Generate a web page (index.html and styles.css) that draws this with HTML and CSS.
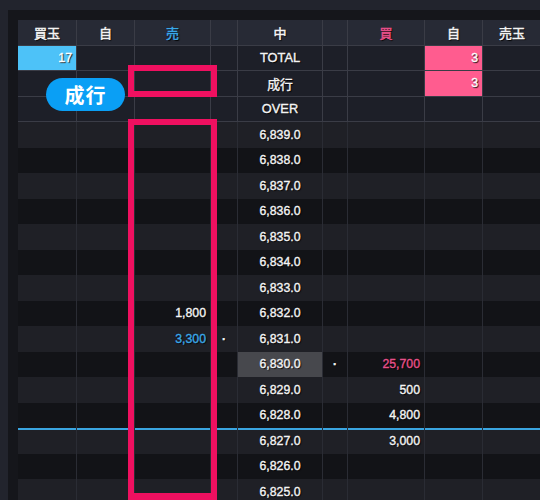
FILE: index.html
```html
<!DOCTYPE html>
<html lang="ja">
<head>
<meta charset="utf-8">
<link rel="stylesheet" href="styles.css">
</head>
<body>
<div class="frame">
  <div class="inner">
    <div class="board">
      <div class="row head">
        <div class="c">買玉</div><div class="c">自</div><div class="c sell">売</div><div class="c"></div><div class="c">中</div><div class="c"></div><div class="c buy">買</div><div class="c">自</div><div class="c">売玉</div>
      </div>
      <div class="row top">
        <div class="c num bluebg">17</div><div class="c"></div><div class="c"></div><div class="c"></div><div class="c mid">TOTAL</div><div class="c"></div><div class="c"></div><div class="c num pinkbg">3</div><div class="c"></div>
      </div>
      <div class="row top">
        <div class="c"></div><div class="c"></div><div class="c"></div><div class="c"></div><div class="c mid">成行</div><div class="c"></div><div class="c"></div><div class="c num pinkbg">3</div><div class="c"></div>
      </div>
      <div class="row top last">
        <div class="c"></div><div class="c"></div><div class="c"></div><div class="c"></div><div class="c mid">OVER</div><div class="c"></div><div class="c"></div><div class="c"></div><div class="c"></div>
      </div>

      <div class="row odd"><div class="c"></div><div class="c"></div><div class="c"></div><div class="c"></div><div class="c mid">6,839.0</div><div class="c"></div><div class="c"></div><div class="c"></div><div class="c"></div></div>
      <div class="row even"><div class="c"></div><div class="c"></div><div class="c"></div><div class="c"></div><div class="c mid">6,838.0</div><div class="c"></div><div class="c"></div><div class="c"></div><div class="c"></div></div>
      <div class="row odd"><div class="c"></div><div class="c"></div><div class="c"></div><div class="c"></div><div class="c mid">6,837.0</div><div class="c"></div><div class="c"></div><div class="c"></div><div class="c"></div></div>
      <div class="row even"><div class="c"></div><div class="c"></div><div class="c"></div><div class="c"></div><div class="c mid">6,836.0</div><div class="c"></div><div class="c"></div><div class="c"></div><div class="c"></div></div>
      <div class="row odd"><div class="c"></div><div class="c"></div><div class="c"></div><div class="c"></div><div class="c mid">6,835.0</div><div class="c"></div><div class="c"></div><div class="c"></div><div class="c"></div></div>
      <div class="row even"><div class="c"></div><div class="c"></div><div class="c"></div><div class="c"></div><div class="c mid">6,834.0</div><div class="c"></div><div class="c"></div><div class="c"></div><div class="c"></div></div>
      <div class="row odd"><div class="c"></div><div class="c"></div><div class="c"></div><div class="c"></div><div class="c mid">6,833.0</div><div class="c"></div><div class="c"></div><div class="c"></div><div class="c"></div></div>
      <div class="row even"><div class="c"></div><div class="c"></div><div class="c num">1,800</div><div class="c"></div><div class="c mid">6,832.0</div><div class="c"></div><div class="c"></div><div class="c"></div><div class="c"></div></div>
      <div class="row odd"><div class="c"></div><div class="c"></div><div class="c num sell">3,300</div><div class="c dot">·</div><div class="c mid">6,831.0</div><div class="c"></div><div class="c"></div><div class="c"></div><div class="c"></div></div>
      <div class="row even"><div class="c"></div><div class="c"></div><div class="c"></div><div class="c"></div><div class="c mid cur">6,830.0</div><div class="c dot">·</div><div class="c num buy">25,700</div><div class="c"></div><div class="c"></div></div>
      <div class="row odd"><div class="c"></div><div class="c"></div><div class="c"></div><div class="c"></div><div class="c mid">6,829.0</div><div class="c"></div><div class="c num">500</div><div class="c"></div><div class="c"></div></div>
      <div class="row even"><div class="c"></div><div class="c"></div><div class="c"></div><div class="c"></div><div class="c mid">6,828.0</div><div class="c"></div><div class="c num">4,800</div><div class="c"></div><div class="c"></div></div>
      <div class="row odd cut"><div class="c"></div><div class="c"></div><div class="c"></div><div class="c"></div><div class="c mid">6,827.0</div><div class="c"></div><div class="c num">3,000</div><div class="c"></div><div class="c"></div></div>
      <div class="row even"><div class="c"></div><div class="c"></div><div class="c"></div><div class="c"></div><div class="c mid">6,826.0</div><div class="c"></div><div class="c"></div><div class="c"></div><div class="c"></div></div>
      <div class="row odd"><div class="c"></div><div class="c"></div><div class="c"></div><div class="c"></div><div class="c mid">6,825.0</div><div class="c"></div><div class="c"></div><div class="c"></div><div class="c"></div></div>
    </div>
  </div>
  <div class="mark mark-a"></div>
  <div class="mark mark-b"></div>
  <div class="badge">成行</div>
</div>
</body>
</html>
```
FILE: styles.css
```css
html, body {
  margin: 0;
  padding: 0;
  width: 540px;
  height: 500px;
  overflow: hidden;
  background: #22242d;
}
.frame {
  position: relative;
  width: 540px;
  height: 500px;
  padding: 10px 0 0 8px;
  box-sizing: border-box;
  font-family: "Liberation Sans", "Noto Sans CJK JP", sans-serif;
  font-size: 12.3px;
  color: #f4f4f4;
}
.inner {
  background: #15161b;
  height: 100%;
  padding: 10px 0 0 10px;
  box-sizing: border-box;
  overflow: hidden;
}
.board {
  width: 524px;
}
.row {
  display: grid;
  grid-template-columns: 59px 58px 76px 27px 85px 25px 77px 58px 59px;
  height: 25.5px;
  box-sizing: border-box;
}
.c {
  box-sizing: border-box;
  border-right: 1px solid #2a2c34;
  display: flex;
  align-items: center;
  justify-content: center;
  text-shadow: 1px 1px 1px #000;
  -webkit-text-stroke: 0.35px currentColor;
  white-space: nowrap;
}
.head {
  background: #272a35;
  border-bottom: 1px solid #3a3c46;
  font-size: 13px;
}
.head .c {
  -webkit-text-stroke: 0.45px currentColor;
}
.head .c,
.top .c {
  border-right-color: #3a3c46;
}
.top {
  background: #1d1f28;
  border-bottom: 1px solid #3a3c46;
}
.top .mid {
  font-size: 12.8px;
}
.odd { background: #1f2026; }
.even { background: #121317; }
.num {
  justify-content: flex-end;
  padding-right: 4px;
}
.sell { color: #3aa8e8; }
.buy { color: #e8508a; }
.bluebg {
  background: #4dc2f8;
  color: #fff;
}
.pinkbg {
  background: #ff5c8f;
  color: #fff;
}
.cur { background: #47484d; }
.dot {
  font-weight: bold;
  font-size: 12px;
}
.cut {
  box-shadow: inset 0 2px 0 #3aa5e0;
}
.mark {
  position: absolute;
  left: 128px;
  width: 89px;
  border: 6px solid #ef1060;
  box-sizing: border-box;
}
.mark-a {
  top: 65px;
  height: 32px;
}
.mark-b {
  top: 119px;
  height: 381px;
  border-bottom-width: 7px;
}
.badge {
  position: absolute;
  left: 46px;
  top: 78px;
  width: 79px;
  height: 33px;
  border-radius: 17px;
  background: #0a9ff5;
  color: #fff;
  font-family: "Noto Sans CJK JP", sans-serif;
  font-weight: bold;
  font-size: 20px;
  display: flex;
  align-items: center;
  justify-content: center;
  letter-spacing: 1px;
}
```
